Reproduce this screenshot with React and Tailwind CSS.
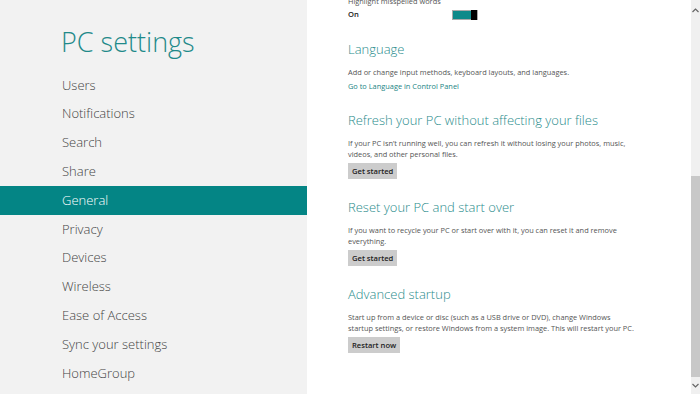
const navItems = [
  'Users',
  'Notifications',
  'Search',
  'Share',
  'General',
  'Privacy',
  'Devices',
  'Wireless',
  'Ease of Access',
  'Sync your settings',
  'HomeGroup',
]

function Section({ title, children, className = 'mt-[18px]' }) {
  return (
    <section className={className}>
      <h2 className="text-[13px] leading-[20px] font-light text-[#2a8c8c]">{title}</h2>
      <div className="mt-[8px]">{children}</div>
    </section>
  )
}

function Desc({ children }) {
  return <p className="text-[7.4px] leading-[11px] text-[#555] w-[292px]">{children}</p>
}

function Btn({ children }) {
  return (
    <button className="mt-[3px] block h-[16px] px-[4px] bg-[#cccccc] text-[7.6px] font-semibold text-[#222] leading-[16px]">
      {children}
    </button>
  )
}

export default function App() {
  return (
    <div
      className="flex h-[394px] w-[700px] overflow-hidden bg-white"
      style={{ fontFamily: '"Open Sans", "Noto Sans", sans-serif' }}
    >
      <aside className="w-[307px] shrink-0 bg-[#f2f2f2] pt-[22px]">
        <h1 className="pl-[61px] text-[27px] leading-[40px] font-light text-[#1f8a8a]">PC settings</h1>
        <nav className="mt-[9px] flex flex-col">
          {navItems.map((item) => (
            <div
              key={item}
              className={
                item === 'General'
                  ? 'h-[28.8px] pl-[62px] flex items-center bg-[#048585] text-[13px] text-white font-light'
                  : 'h-[28.8px] pl-[62px] flex items-center text-[13px] text-[#444] font-light'
              }
            >
              {item}
            </div>
          ))}
        </nav>
      </aside>

      <main className="flex-1 pl-[41px] mt-[-4px]">
        <div className="text-[7.4px] leading-[11px] text-[#555]">Highlight misspelled words</div>
        <div className="mt-[2px] flex items-center">
          <span className="w-[104px] text-[7.6px] font-semibold text-[#222]">On</span>
          <div className="flex h-[10px] w-[26px] items-center border border-[#aaa] bg-[#aaa]">
            <div className="h-[8px] flex-1 bg-[#0e8a8a]"></div>
            <div className="h-[10px] w-[6px] bg-black"></div>
          </div>
        </div>

        <Section title="Language" className="mt-[19px]">
          <Desc>Add or change input methods, keyboard layouts, and languages.</Desc>
          <a className="mt-[3px] block text-[7.4px] leading-[11px] text-[#1a8585]">Go to Language in Control Panel</a>
        </Section>

        <Section title="Refresh your PC without affecting your files">
          <Desc>If your PC isn’t running well, you can refresh it without losing your photos, music, videos, and other personal files.</Desc>
          <Btn>Get started</Btn>
        </Section>

        <Section title="Reset your PC and start over">
          <Desc>If you want to recycle your PC or start over with it, you can reset it and remove everything.</Desc>
          <Btn>Get started</Btn>
        </Section>

        <Section title="Advanced startup">
          <Desc>
            Start up from a device or disc (such as a USB drive or DVD), change Windows
            <br />
            startup settings, or restore Windows from a system image. This will restart your PC.
          </Desc>
          <Btn>Restart now</Btn>
        </Section>
      </main>

      <div className="flex w-[9px] shrink-0 flex-col bg-[#f0f0f0]">
        <div className="flex h-[20px] items-center justify-center text-[#666]">
          <svg width="7" height="5" viewBox="0 0 7 5"><path d="M0.5 4 L3.5 1 L6.5 4" fill="none" stroke="currentColor" strokeWidth="1.2" /></svg>
        </div>
        <div className="mt-[156px] h-[201px] bg-[#c8c8c8]"></div>
        <div className="flex flex-1 items-center justify-center text-[#666]">
          <svg width="7" height="5" viewBox="0 0 7 5"><path d="M0.5 1 L3.5 4 L6.5 1" fill="none" stroke="currentColor" strokeWidth="1.2" /></svg>
        </div>
      </div>
    </div>
  )
}
